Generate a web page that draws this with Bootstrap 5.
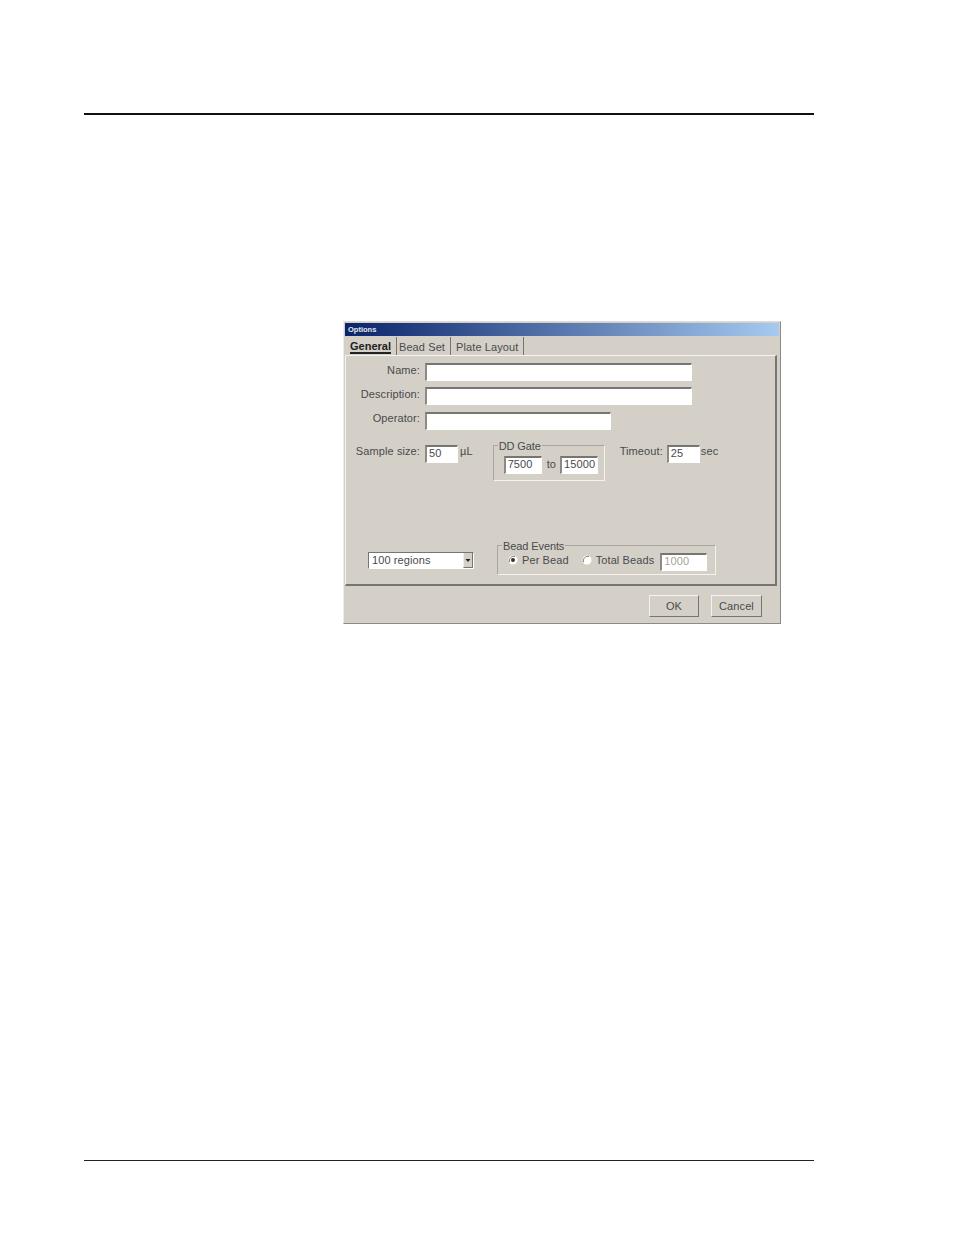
<!DOCTYPE html>
<html lang="en">
<head>
<meta charset="utf-8">
<title>Options</title>
<link rel="stylesheet" href="https://cdn.jsdelivr.net/npm/bootstrap@5.3.0/dist/css/bootstrap.min.css">
<style>
html,body{background:#fff;margin:0;height:1235px;overflow:hidden}
.sheet{width:954px;height:1235px;padding:113px 140px 0 84px}
.rule-top{height:2px;background:#111;opacity:1;margin:0;border:0}
.rule-bot{height:1px;background:#222;opacity:1;margin:536px 0 0;border:0}
.dlg{width:438px;height:303px;margin:206px 0 0 259px;background:#d4d0c8;border:1px solid #8c8a85;border-top-color:#dedbd5;border-left-color:#efede9;padding:1px;font:11px/13px "Liberation Sans",Arial,sans-serif;letter-spacing:.1px;color:#4a4a4a}
.ttl{height:13px;background:linear-gradient(90deg,#0a246a,#a6caf0);color:#e8e8ee;font-size:7.5px;font-weight:700;line-height:13px;padding-left:3px;letter-spacing:0}
.tabrow{height:19px;padding-left:5px}
.tabi{height:18px;display:flex;align-items:center;border-right:1px solid #77756f;padding:3px 5px 0 2px;white-space:nowrap}
.tabi.on{font-weight:700;color:#222;padding:2px 5px 0 0;text-decoration:underline;text-underline-offset:2px;text-decoration-thickness:2px;letter-spacing:0}
.tabi.pl{padding-left:5px}
.pane{width:432px;height:231px;border-top:1px solid #f4f3f0;border-left:1px solid #f4f3f0;border-right:2px solid #77756f;border-bottom:2px solid #77756f}
.lbl{width:75px;padding-right:1px;text-align:right;white-space:nowrap;flex:none;margin-right:4px}
.up2{margin-top:-3px}.up4{margin-top:-5px}
.inp{height:18px;background:#fff;border:1px solid #fff;border-top:2px solid #77756f;border-left:2px solid #8c8a85;padding:0 0 0 2px;line-height:13px;white-space:nowrap;flex:none}
.wbig{width:267px}.wmed{width:186px}.wsm{width:33px}.wgt{width:38px}.wthou{width:47px;margin-left:6px}
.r1{margin-top:7px}.r2{margin-top:6px}.r3{margin-top:7px}.r4{margin-top:15px;height:36px}.r5{margin-top:64px}
.gbox{position:relative;border:1px solid #a8a6a0;border-bottom-color:#f4f3f0;border-right-color:#f4f3f0;flex:none}
.gleg{position:absolute;left:4px;top:-6px;background:#d4d0c8;padding:0 1px;white-space:nowrap;line-height:12px;letter-spacing:-.1px}
.gdd{width:112px;height:36px;margin-left:20px;padding:10px 6px 0 10px}
.gbe{width:219px;height:30px;margin-left:23px;padding:4px 8px 0 10px}
.tow{margin:2px 4px 0 5px}
.unit{margin-left:2px}
.tmo{margin-left:15px;margin-right:4px}
.secu{margin-left:1px}
.cmb{width:106px;height:17px;margin-left:22px;background:#fff;border:1px solid #fff;border-top:1px solid #77756f;border-left:1px solid #77756f;padding-left:3px;line-height:15px}
.cbtn{width:10px;height:15px;background:#d4d0c8;border-left:1px solid #eee;border-right:1px solid #77756f;border-bottom:1px solid #77756f}
.cbtn svg{display:block}
.off{color:#a5a39e}
.rtx{margin-top:-4px;white-space:nowrap;flex:none}
.bottom{height:38px;padding:9px 17px 0 0}
.wbtn{height:22px;background:#d4d0c8;border:1px solid #77756f;border-top-color:#f4f3f0;border-left-color:#f4f3f0;text-align:center;line-height:21px;flex:none}
.wok{width:50px;margin-right:12px}.wcn{width:51px}
.rad{margin:-4px 4px 0 0;flex:none}
.rad2{margin-left:13px}
</style>
</head>
<body>
<div class="sheet">
  <hr class="rule-top">
  <div class="dlg">
    <div class="ttl">Options</div>
    <div class="tabrow d-flex align-items-center">
      <div class="tabi on">General</div>
      <div class="tabi">Bead Set</div>
      <div class="tabi pl">Plate Layout</div>
    </div>
    <div class="pane">
      <div class="d-flex align-items-center r1"><div class="lbl up2">Name:</div><div class="inp wbig"></div></div>
      <div class="d-flex align-items-center r2"><div class="lbl up2">Description:</div><div class="inp wbig"></div></div>
      <div class="d-flex align-items-center r3"><div class="lbl up4">Operator:</div><div class="inp wmed"></div></div>
      <div class="d-flex align-items-start r4">
        <div class="lbl">Sample size:</div>
        <div class="inp wsm">50</div>
        <div class="unit">µL</div>
        <div class="gbox gdd d-flex align-items-start">
          <div class="gleg">DD Gate</div>
          <div class="inp wgt">7500</div><div class="tow">to</div><div class="inp wgt">15000</div>
        </div>
        <div class="tmo">Timeout:</div>
        <div class="inp wsm">25</div>
        <div class="secu">sec</div>
      </div>
      <div class="d-flex align-items-center r5">
        <div class="cmb d-flex justify-content-between align-items-center"><span>100 regions</span>
          <div class="cbtn"><svg width="8" height="14" viewBox="0 0 8 14"><path d="M1.5 6h5L4 9z" fill="#222"/></svg></div>
        </div>
        <div class="gbox gbe d-flex align-items-center">
          <div class="gleg">Bead Events</div>
          <svg class="rad" width="10" height="10" viewBox="0 0 10 10"><circle cx="5" cy="5" r="4.5" fill="#fff"/><path d="M1.5 7A4.5 4.5 0 0 1 7 1.5" fill="none" stroke="#77756f"/><circle cx="5" cy="5" r="2" fill="#333"/></svg>
          <span class="rtx">Per Bead</span>
          <svg class="rad rad2" width="10" height="10" viewBox="0 0 10 10"><circle cx="5" cy="5" r="4.5" fill="#fff"/><path d="M1.5 7A4.5 4.5 0 0 1 7 1.5" fill="none" stroke="#77756f"/></svg>
          <span class="rtx">Total Beads</span>
          <div class="inp off wthou">1000</div>
        </div>
      </div>
    </div>
    <div class="bottom d-flex justify-content-end">
      <div class="wbtn wok">OK</div>
      <div class="wbtn wcn">Cancel</div>
    </div>
  </div>
  <hr class="rule-bot">
</div>
</body>
</html>
